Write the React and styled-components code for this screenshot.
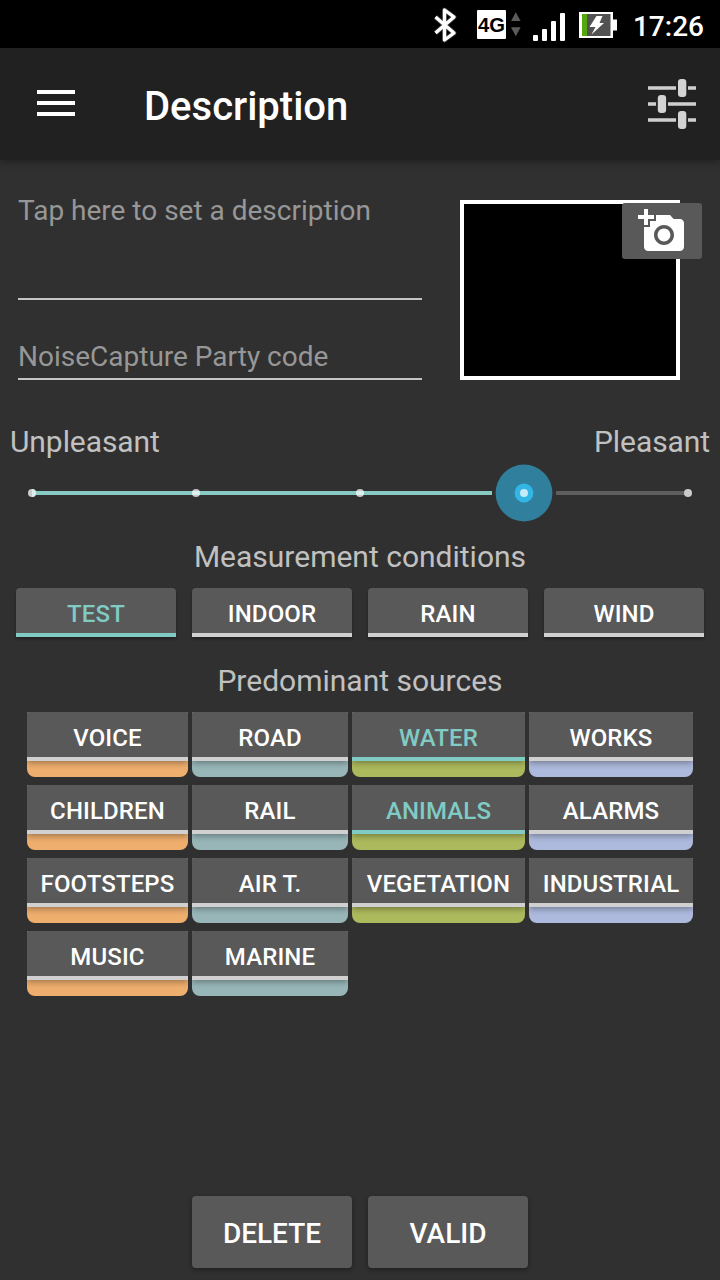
import React from 'react';
import styled, { createGlobalStyle } from 'styled-components';

const GlobalStyle = createGlobalStyle`
  * { box-sizing: border-box; }
  body {
    margin: 0;
    background: #303030;
    font-family: Roboto, "Liberation Sans", sans-serif;
  }
  button {
    font-family: inherit;
    border: 0;
    margin: 0;
    padding: 0;
  }
`;

const ACCENT = '#80cbc4';

const Screen = styled.div`
  width: 720px;
  height: 1280px;
  display: flex;
  flex-direction: column;
  overflow: hidden;
  background: #303030;
  color: #c1c1c1;
`;

const StatusBar = styled.header`
  flex: none;
  height: 48px;
  display: flex;
  align-items: center;
  justify-content: flex-end;
  padding-right: 16px;
  background: #000;
`;

const StatusIcons = styled.svg`
  display: block;
  width: 190px;
  height: 48px;
  margin-right: 13px;
`;

const Clock = styled.span`
  padding-top: 6px;
  font-size: 28px;
  line-height: 34px;
  font-weight: 500;
  color: #fff;
`;

const AppBar = styled.nav`
  flex: none;
  height: 112px;
  display: flex;
  align-items: center;
  padding: 0 24px 0 37px;
  background: #212121;
  box-shadow: 0 1px 8px rgba(0, 0, 0, 0.4);
`;

const MenuIcon = styled.span`
  width: 38px;
  height: 26px;
  margin-top: -2px;
  border-top: 4px solid #fff;
  border-bottom: 4px solid #fff;
  display: flex;
  align-items: center;
  &::after {
    content: '';
    flex: 1;
    height: 4px;
    background: #fff;
  }
`;

const Title = styled.h1`
  flex: 1;
  margin: 0;
  padding: 5px 0 0 69px;
  font-size: 40px;
  line-height: 48px;
  font-weight: 500;
  color: #fff;
`;

const TuneIcon = styled.svg`
  display: block;
  width: 48px;
  height: 52px;
`;

const Details = styled.section`
  display: flex;
  justify-content: space-between;
  padding: 32px 18px 0;
`;

const Fields = styled.div`
  width: 404px;
`;

const Field = styled.div`
  height: ${(p) => p.$height}px;
  padding-top: ${(p) => p.$top}px;
  border-bottom: 2px solid #c4c4c4;
  font-size: 28px;
  line-height: 36px;
  color: #979797;
`;

const Photo = styled.div`
  position: relative;
  width: 220px;
  height: 180px;
  margin: 8px 22px 0 0;
  border: 4px solid #fff;
  background: #000;
`;

const PhotoButton = styled.button`
  position: absolute;
  top: -1px;
  right: -26px;
  width: 80px;
  height: 56px;
  display: flex;
  align-items: center;
  justify-content: center;
  border-radius: 3px;
  background: #595959;
`;

const Rating = styled.section`
  padding-top: 44px;
`;

const RatingLabels = styled.div`
  display: flex;
  justify-content: space-between;
  padding: 0 10px;
  font-size: 30px;
  line-height: 36px;
  letter-spacing: -0.08px;
`;

const Slider = styled.svg`
  display: block;
  width: 720px;
  height: 60px;
  margin-top: 3px;
`;

const SectionTitle = styled.h2`
  margin: ${(p) => p.$top}px 0 0;
  font-size: 30px;
  line-height: 36px;
  font-weight: 400;
  text-align: center;
`;

const ConditionRow = styled.div`
  display: grid;
  grid-template-columns: repeat(4, 160px);
  gap: 16px;
  padding: 13px 16px 0;
`;

const Toggle = styled.button`
  display: block;
  width: 100%;
  height: 49px;
  padding-top: 7px;
  border-bottom: 4px solid ${(p) => (p.$on ? ACCENT : '#d0d0d0')};
  border-radius: ${(p) => p.$radius}px ${(p) => p.$radius}px 0 0;
  background: #595959;
  box-shadow: 0 2px ${(p) => p.$blur}px rgba(0, 0, 0, 0.34);
  font-size: 24px;
  font-weight: 500;
  line-height: 38px;
  letter-spacing: 0.12px;
  white-space: nowrap;
  color: ${(p) => (p.$on ? ACCENT : '#fff')};
`;

const SourceGrid = styled.div`
  display: grid;
  grid-template-columns: 161px 156px 173px 164px;
  column-gap: 4px;
  row-gap: 8px;
  padding: 13px 27px 0;
`;

const Source = styled.div`
  height: 65px;
  overflow: hidden;
  border-radius: 1px 1px 8px 8px;
  background: ${(p) => p.$color};
`;

const Actions = styled.footer`
  display: flex;
  justify-content: center;
  gap: 16px;
  margin-top: auto;
  padding-bottom: 12px;
`;

const ActionButton = styled.button`
  width: 160px;
  height: 72px;
  padding-top: 4px;
  border-radius: 4px;
  background: #595959;
  box-shadow: 0 2px 5px rgba(0, 0, 0, 0.32);
  font-size: 28px;
  font-weight: 500;
  line-height: 68px;
  color: #fff;
`;

const CONDITIONS = [['TEST', true], ['INDOOR'], ['RAIN'], ['WIND']];

const SOURCE_COLORS = ['#eeae6d', '#98b6b8', '#adb95d', '#adbadd'];

const SOURCES = [
  ['VOICE'], ['ROAD'], ['WATER', true], ['WORKS'],
  ['CHILDREN'], ['RAIL'], ['ANIMALS', true], ['ALARMS'],
  ['FOOTSTEPS'], ['AIR T.'], ['VEGETATION'], ['INDUSTRIAL'],
  ['MUSIC'], ['MARINE'],
];

function StatusGlyphs() {
  return (
    <StatusIcons viewBox="430 0 190 48">
      <path
        d="M435.5 17 L454 33 L444.5 40 V10 L454 17 L435.5 33"
        fill="none" stroke="#555" strokeWidth="5" strokeLinejoin="round" opacity="0.6"
      />
      <path
        d="M435.5 17 L454 33 L444.5 40 V10 L454 17 L435.5 33"
        fill="none" stroke="#fff" strokeWidth="3.4" strokeLinejoin="round"
      />
      <rect x="477" y="10" width="29" height="29" rx="1" fill="#fff" />
      <text
        x="491.6" y="32.2" textAnchor="middle" textLength="27" lengthAdjust="spacingAndGlyphs"
        fontFamily="Liberation Sans, sans-serif" fontSize="20.5" fontWeight="700" fill="#000"
      >
        4G
      </text>
      <path d="M511 21 L515.8 12.3 L520.6 21 Z M511 27.3 H520.6 L515.8 36.3 Z" fill="#5b5b5b" />
      <g fill="#fff">
        <rect x="533" y="35" width="5" height="6" rx="1" />
        <rect x="542" y="29" width="5" height="12" rx="1" />
        <rect x="551" y="21" width="5" height="20" rx="1" />
        <rect x="560" y="13" width="5" height="28" rx="1" />
        <path d="M579 12 H613 V19.5 H617 V30.5 H613 V38 H579 Z" />
      </g>
      <rect x="582" y="14" width="28.5" height="22" fill="#525252" />
      <rect x="582" y="14" width="5" height="22" fill="#55a80c" />
      <path d="M596.5 16 H602.5 L599.5 23 H604 L591.5 34.5 L595.5 27 H589.5 Z" fill="#fff" />
    </StatusIcons>
  );
}

function TuneGlyph() {
  return (
    <TuneIcon viewBox="648 78 48 52">
      <path
        d="M648 88 H676 M688 88 H696 M648 104 H656 M668 104 H696 M648 120 H676 M688 120 H696"
        stroke="#cfcfcf" strokeWidth="3.4" fill="none"
      />
      <g fill="#d3d3d3">
        <rect x="678" y="79" width="8.3" height="18" rx="3.2" />
        <rect x="657.8" y="95" width="8.3" height="18" rx="3.2" />
        <rect x="678" y="111" width="8.3" height="18" rx="3.2" />
      </g>
    </TuneIcon>
  );
}

function CameraGlyph() {
  return (
    <svg width="48" height="48" viewBox="0 0 24 24" fill="#fff">
      <path d="M3 4V1h2v3h3v2H5v3H3V6H0V4h3zm3 6V7h3V4h7l1.83 2H21c1.1 0 2 .9 2 2v12c0 1.1-.9 2-2 2H5c-1.1 0-2-.9-2-2V10h3zm7 9c2.76 0 5-2.24 5-5s-2.24-5-5-5-5 2.24-5 5 2.24 5 5 5zm-3.2-5c0 1.77 1.43 3.2 3.2 3.2s3.2-1.43 3.2-3.2-1.43-3.2-3.2-3.2-3.2 1.43-3.2 3.2z" />
    </svg>
  );
}

function PleasantnessSlider() {
  return (
    <Slider viewBox="0 0 720 60">
      <rect x="32" y="28" width="460" height="4" fill="#88cac3" />
      <rect x="556" y="28" width="132" height="4" fill="#5e5e5e" />
      <circle cx="524" cy="30" r="28.4" fill="#30809d" />
      <circle cx="524" cy="30" r="9.4" fill="#33b5e5" />
      {[32, 196, 360, 524, 688].map((x) => (
        <circle key={x} cx={x} cy="30" r="4" fill={x === 32 || x === 688 ? '#cbcbcb' : '#fff'} fillOpacity={x === 32 || x === 688 ? 1 : 0.72} />
      ))}
      <path d="M32 26 A4 4 0 0 1 32 34 Z" fill="#dcecea" />
    </Slider>
  );
}

export default function App() {
  return (
    <Screen>
      <GlobalStyle />
      <StatusBar>
        <StatusGlyphs />
        <Clock>17:26</Clock>
      </StatusBar>
      <AppBar>
        <MenuIcon />
        <Title>Description</Title>
        <TuneGlyph />
      </AppBar>
      <Details>
        <Fields>
          <Field $height={108} $top={1}>Tap here to set a description</Field>
          <Field $height={80} $top={39}>NoiseCapture Party code</Field>
        </Fields>
        <Photo>
          <PhotoButton aria-label="Add photo">
            <CameraGlyph />
          </PhotoButton>
        </Photo>
      </Details>
      <Rating>
        <RatingLabels>
          <span>Unpleasant</span>
          <span>Pleasant</span>
        </RatingLabels>
        <PleasantnessSlider />
      </Rating>
      <SectionTitle $top={16}>Measurement conditions</SectionTitle>
      <ConditionRow>
        {CONDITIONS.map(([label, on]) => (
          <Toggle key={label} $on={on} $radius={4} $blur={3}>{label}</Toggle>
        ))}
      </ConditionRow>
      <SectionTitle $top={26}>Predominant sources</SectionTitle>
      <SourceGrid>
        {SOURCES.map(([label, on], i) => (
          <Source key={label} $color={SOURCE_COLORS[i % 4]}>
            <Toggle $on={on} $radius={1} $blur={6}>{label}</Toggle>
          </Source>
        ))}
      </SourceGrid>
      <Actions>
        <ActionButton>DELETE</ActionButton>
        <ActionButton>VALID</ActionButton>
      </Actions>
    </Screen>
  );
}
